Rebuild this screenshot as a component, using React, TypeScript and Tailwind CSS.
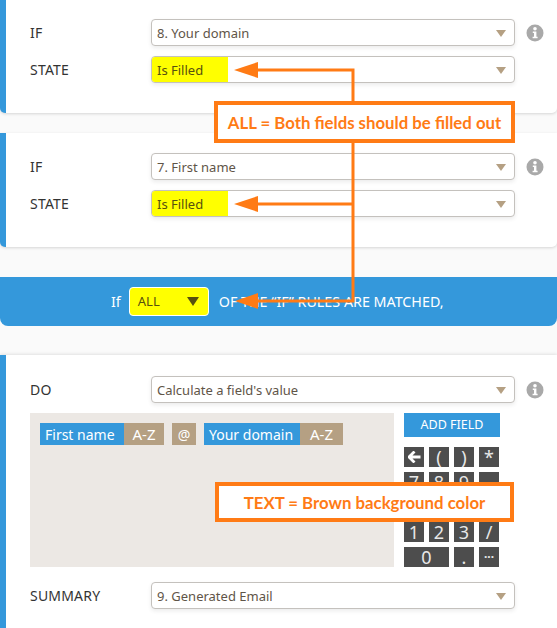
import React from "react";

const font = { fontFamily: '"Noto Sans", "Open Sans", sans-serif' };

function Select({ text, yellow }: { text: string; yellow?: boolean }) {
  return (
    <div className="relative flex h-[27px] w-[364px] items-center overflow-hidden rounded-[4px] border border-[#c4c1bd] bg-white text-[13px] text-[#5f5548] shadow-[0_2px_4px_rgba(0,0,0,0.08)]">
      {yellow ? (
        <span className="flex h-full w-[76px] items-center bg-[#ffff00] pl-[5px] pt-[2px] text-[#57500f]">{text}</span>
      ) : (
        <span className="pl-[5px] pt-[2px]">{text}</span>
      )}
      <span className="absolute right-[8px] top-[10px] h-0 w-0 border-x-[5.5px] border-t-[7px] border-x-transparent border-t-[#b5a083]" />
    </div>
  );
}

function Info() {
  return (
    <svg width="18" height="18" viewBox="0 0 18 18" className="ml-[11px]">
      <circle cx="9" cy="9" r="8.5" fill="#a9a9a9" />
      <circle cx="9" cy="4.8" r="1.8" fill="#fff" />
      <path d="M6.8 7.5h3.6v5.2h1.2v1.6H6.6v-1.6h1.4V9.1H6.8z" fill="#fff" />
    </svg>
  );
}

function Row({ label, text, yellow, info, className }: { label: string; text: string; yellow?: boolean; info?: boolean; className?: string }) {
  return (
    <div className={"flex items-center " + (className ?? "")}>
      <span className="w-[121px] text-[14px] tracking-[0.2px] text-[#333]">{label}</span>
      <Select text={text} yellow={yellow} />
      {info && <Info />}
    </div>
  );
}

function Key({ k, wide }: { k: string; wide?: boolean }) {
  const small = k === "...";
  return (
    <div className={"flex h-[20px] items-center justify-center bg-[#4d4d4d] leading-none text-[#e8e8e8] " + (small ? "pb-[6px] text-[12px] font-bold " : "text-[18px] ") + (wide ? "col-span-2" : "")}>
      {k === "back" ? (
        <svg width="13" height="12" viewBox="0 0 13 12">
          <path d="M6.5 0.5 1 6l5.5 5.5M1.5 6H12.5" stroke="#fff" strokeWidth="2.8" fill="none" />
        </svg>
      ) : (
        k
      )}
    </div>
  );
}

const keys = ["back", "(", ")", "*", "7", "8", "9", "-", "4", "5", "6", "+", "1", "2", "3", "/"];

function Chip({ children, className }: { children: React.ReactNode; className: string }) {
  return (
    <span className={"flex h-[22px] items-center text-[14px] text-white " + className}>{children}</span>
  );
}

function Callout({ text, className }: { text: string; className: string }) {
  return (
    <div className={"absolute flex items-center justify-center border-[4px] border-[#ff7b15] bg-white pt-[1px] text-[16.8px] font-bold text-[#ff7b15] " + className} style={{ fontFamily: '"Lato", sans-serif' }}>
      {text}
    </div>
  );
}

export default function App() {
  return (
    <div className="relative h-[628px] w-[557px] overflow-hidden bg-[#fafafa]" style={font}>
      <div className="h-[113px] rounded-b-[5px] border-l-[6px] border-[#3498db] bg-white pl-[24px] pt-[19px] shadow-[0_1px_3px_rgba(0,0,0,0.15)]">
        <Row label="IF" text="8. Your domain" info />
        <Row label="STATE" text="Is Filled" yellow className="mt-[10px]" />
      </div>

      <div className="mt-[20px] h-[114px] rounded-b-[5px] border-l-[6px] border-[#3498db] bg-white pl-[24px] pt-[20px] shadow-[0_1px_3px_rgba(0,0,0,0.15)]">
        <Row label="IF" text="7. First name" info />
        <Row label="STATE" text="Is Filled" yellow className="mt-[10px]" />
      </div>

      <div className="mt-[30px] flex h-[49px] items-center rounded-b-[8px] bg-[#3498db] pl-[111px] text-[14.3px] text-white">
        <span>If</span>
        <div className="relative ml-[8px] flex h-[29px] w-[80px] items-center rounded-[4px] border border-white bg-[#ffff00] pl-[8px] pt-[1px] text-[13px] text-[#57500f]">
          ALL
          <span className="absolute right-[9px] top-[9px] h-0 w-0 border-x-[6px] border-t-[9px] border-x-transparent border-t-[#57500f]" />
        </div>
        <span className="ml-[10px]">OF THE “IF” RULES ARE MATCHED,</span>
      </div>

      <div className="mt-[29px] h-[290px] border-l-[6px] border-[#3498db] bg-white pl-[24px] pt-[21px] shadow-[0_-1px_3px_rgba(0,0,0,0.1)]">
        <Row label="DO" text="Calculate a field's value" info />
        <div className="mt-[10px] flex">
          <div className="h-[154px] w-[364px] bg-[#ece8e4] pl-[10px] pt-[10px]">
            <div className="flex">
              <Chip className="w-[84px] bg-[#3498db] pl-[5px]">First name</Chip>
              <Chip className="w-[40px] justify-center bg-[#b5a083] text-[15px]">A-Z</Chip>
              <Chip className="ml-[8px] w-[24px] justify-center bg-[#b5a083]">@</Chip>
              <Chip className="ml-[8px] w-[96px] bg-[#3498db] pl-[5px]">Your domain</Chip>
              <Chip className="w-[43px] justify-center bg-[#b5a083] text-[15px]">A-Z</Chip>
            </div>
          </div>
          <div className="ml-[10px] w-[96px]">
            <div className="flex h-[24px] items-center justify-center bg-[#3498db] pt-[1px] text-[12.5px] text-white">ADD FIELD</div>
            <div className="mt-[10px] grid w-[95px] grid-cols-4 gap-[5px]">
              {keys.map((k) => (
                <Key key={k} k={k} />
              ))}
              <Key k="0" wide />
              <Key k="." />
              <Key k="..." />
            </div>
          </div>
        </div>
        <Row label="SUMMARY" text="9. Generated Email" className="mt-[15px]" />
      </div>

      {/* annotations */}
      <svg className="absolute left-0 top-0" width="557" height="628" viewBox="0 0 557 628">
        <path d="M255 70H353V301H255M353 204H255" fill="none" stroke="#ff7b15" strokeWidth="3" />
        <path d="M234 70 258 62V78Z M234 204 258 196V212Z M235 301 258 293V309Z" fill="#ff7b15" />
      </svg>
      <Callout text="ALL = Both fields should be filled out" className="left-[214px] top-[101px] h-[42px] w-[301px]" />
      <Callout text="TEXT = Brown background color" className="left-[215px] top-[482px] h-[40px] w-[299px]" />
    </div>
  );
}
